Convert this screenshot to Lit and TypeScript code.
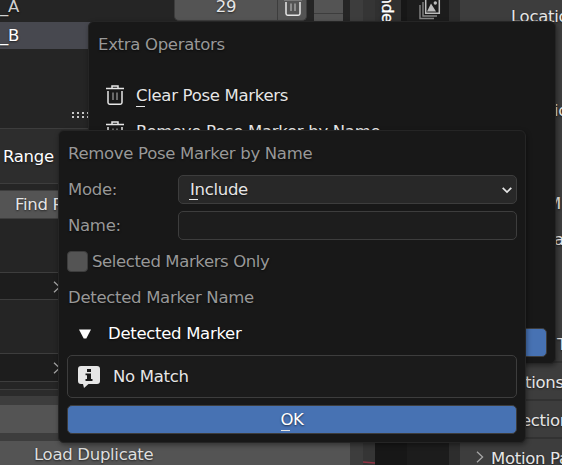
import { LitElement, html, css, svg } from "lit";
import { customElement } from "lit/decorators.js";

const trash = svg`<svg class="icon" width="18" height="20" viewBox="0 0 18 20">
  <path d="M0 3.5H18M6 3V1H12V3" fill="none" stroke="currentColor" stroke-width="1.5"/>
  <path d="M2 6V17.5Q2 19.2 3.7 19.2H14.3Q16 19.2 16 17.5V6" fill="none" stroke="currentColor" stroke-width="1.5"/>
  <path d="M7 7.5V15M11 7.5V15" stroke="currentColor" stroke-width="1.2" opacity=".65"/>
</svg>`;

const right = svg`<svg class="chev" width="8" height="12" viewBox="0 0 8 12">
  <path d="M1 .7L6.6 6L1 11.3" fill="none" stroke="#a6a6a6" stroke-width="1.3"/>
</svg>`;

@customElement("app-root")
export class AppRoot extends LitElement {
  static styles = css`
    * { box-sizing: border-box; }
    :host {
      display: block; position: relative; width: 562px; height: 465px; overflow: hidden;
      font: 16.5px/29px "DejaVu Sans", sans-serif; letter-spacing: -0.3px; color: #e6e6e6; background: #3d3d3d;
      white-space: nowrap; text-shadow: 0 1px 2px #0009;
    }
    svg { display: block; flex: none; }
    .page { display: flex; height: 465px; }
    .left { width: 350px; flex: none; display: flex; flex-direction: column; background: #252525; }
    .top { height: 22px; display: flex; flex: none; overflow: hidden; }
    .top .name { width: 174px; flex: none; line-height: 14px; color: #d0d0d0; }
    .count { width: 104px; height: 21px; flex: none; background: #545454; border: 1px solid #3d3d3d; border-top: 0; border-radius: 0 0 0 5px; text-align: center; line-height: 13px; }
    .bin { width: 29px; height: 21px; flex: none; background: #545454; border: 1px solid #3d3d3d; border-width: 0 1px 1px 0; border-radius: 0 0 5px 0; padding-left: 6px; }
    .bin svg { margin-top: -4px; }
    .arrows { width: 29px; margin-left: 7px; background: linear-gradient(#545454 13px, #3d3d3d 13px 14px, #545454 14px); }
    .rowb { height: 27px; width: 343px; background: #47484f; line-height: 27px; color: #fff; }
    .grip { height: 79px; padding: 63px 0 0 72px; }
    .dots { width: 18px; height: 7px; background: repeating-linear-gradient(90deg, #c8c8c8 0 2px, transparent 2px 5px); mask: linear-gradient(#000 2px, transparent 2px 4px, #000 4px 6px, transparent 6px); }
    .range { height: 56px; border: 1px solid #3d3d3d; border-width: 1px 0; background: #2d2d2d; line-height: 56px; padding-left: 3px; color: #fff; }
    .find { height: 29px; margin-top: 6px; border: 1px solid #3d3d3d; border-width: 1px 0; line-height: 27px; background: #545454; padding-left: 15px; }
    .list { height: 29px; border: 1px solid #3d3d3d; border-width: 1px 0; background: #1d1d1d; padding: 8px 0 0 53px; }
    .gap { height: 53px; }
    .strip { height: 8px; border-bottom: 1px solid #3d3d3d; }
    .strip.low { height: 7px; background: #2b2b2b; }
    .foot { height: 68px; background: #3d3d3d; padding-top: 8px; }
    .blank { height: 28px; background: #545454; }
    .load { height: 28px; margin-top: 8px; background: #545454; line-height: 27px; padding-left: 34px; color: #dedede; }
    .edge { width: 13px; background: #3d3d3d; flex: none; }
    .view { width: 12px; background: #353535; flex: none; display: flex; align-items: flex-end; }
    .tab { width: 26px; background: linear-gradient(#303030 50%, #171717 50%); flex: none; }
    .vert { writing-mode: vertical-rl; height: 22px; line-height: 24px; display: flex; justify-content: flex-end; color: #fff; width: 24px; overflow: hidden; font-size: 16px; letter-spacing: -.7px; -webkit-text-stroke: .3px #fff; }
    .div { width: 6px; background: #171717; flex: none; }
    .icons { width: 42px; background: #1c1c1c; flex: none; padding-left: 12px; }
    .div2 { width: 11px; background: #2d2d2d; flex: none; }
    .props { width: 102px; flex: none; background: #3d3d3d; overflow: hidden; display: flex; flex-direction: column; }
    .p { flex: none; overflow: hidden; line-height: 30px; display: flex; align-items: center; }
    .loc { height: 34px; padding-left: 51px; }
    .ion { height: 154px; padding-left: 94px; }
    .m { height: 32px; padding-left: 87px; }
    .al { height: 40px; padding-left: 94px; }
    .space { height: 64px; }
    .tr { height: 37px; padding: 4px 0 0 97px; }
    .head { height: 38px; border-top: 2px solid #323232; padding-top: 3px; }
    .tions { padding-left: 65px; }
    .ections { padding-left: 61px; }
    .motion { padding-left: 16px; gap: 7px; }
    .motion svg { margin-bottom: 3px; }

    .pop { position: absolute; background: #181818; border: 1px solid #252525; border-radius: 6px; padding: 8px; box-shadow: 1px 2px 5px #0006; }
    .menu { left: 88px; top: 21px; width: 468px; height: 343px; display: flex; flex-direction: column; }
    .dim { color: #989898; }
    .menu .dim { padding-left: 1px; }
    .item { display: flex; align-items: center; height: 29px; padding-left: 9px; gap: 12px; margin-bottom: 7px; }
    .item svg { margin-bottom: 2px; }
    .item.one { margin-top: 22px; }
    .btn { height: 29px; border-radius: 5px; border: 1px solid #3d3d3d; background: #4772b3; color: #fff; text-align: center; line-height: 27px; }
    .menu .btn { margin-top: auto; margin-bottom: -2px; }
    .k { position: relative; }
    .k::after { content: ""; position: absolute; left: 0; bottom: -2px; width: 9px; height: 1px; background: #e6e6e6; }
    .field .k::after { left: -1px; bottom: -1px; }
    .btn .k::after { left: 1px; }
    .dialog { left: 58px; top: 130px; width: 468px; height: 313px; display: flex; flex-direction: column; gap: 7px; }
    .r { height: 29px; flex: none; display: flex; align-items: center; padding-left: 1px; }
    .r .lab { width: 110px; flex: none; }
    .field { flex: 1; height: 29px; border: 1px solid #3d3d3d; border-radius: 5px; background: #1d1d1d; display: flex; align-items: center; justify-content: space-between; padding: 0 4px 0 11px; line-height: 27px; }
    .field.sel { background: #282828; color: #e6e6e6; }
    .box { width: 21px; height: 21px; border-radius: 4px; background: #545454; border: 1px solid #3d3d3d; margin: 0 4px 0 -1px; }
    .check { letter-spacing: -.38px; }
    .open { color: #fff; gap: 17px; padding-left: 12px; }
    .info { height: 43px; border: 1px solid #3d3d3d; border-radius: 5px; background: #1b1b1b; display: flex; align-items: center; padding-left: 10px; gap: 13px; flex: none; }
  `;

  render() {
    return html`
      <div class="page">
        <div class="left">
          <div class="top">
            <div class="name">_A</div>
            <div class="count">29</div>
            <div class="bin">${trash}</div>
            <div class="arrows"></div>
          </div>
          <div class="rowb">_B</div>
          <div class="grip"><div class="dots"></div></div>
          <div class="range">Range</div>
          <div class="find">Find R</div>
          <div class="gap"></div>
          <div class="list">${right}</div>
          <div class="gap"></div>
          <div class="list">${right}</div>
          <div class="strip"></div>
          <div class="strip low"></div>
          <div class="foot">
            <div class="blank"></div>
            <div class="load">Load Duplicate</div>
          </div>
        </div>
        <div class="edge"></div>
        <div class="view">
          <svg width="12" height="4" viewBox="0 0 12 4"><path d="M0 1L12 2" stroke="#8f3444" stroke-width="1.6" /></svg>
        </div>
        <div class="tab"><div class="vert">nde</div></div>
        <div class="div"></div>
        <div class="icons">
          <svg width="22" height="20" viewBox="0 0 22 20">
            <path d="M1 5V18.5H15M4 2V16H18" fill="none" stroke="#858585" stroke-width="1.4" />
            <path d="M6.7 -3V13.3H20.3V-3" fill="none" stroke="#bdbdbd" stroke-width="1.5" />
            <path d="M8 11.5L12 3.5L17 11.5Z" fill="#bdbdbd" /><circle cx="16.3" cy="3" r="1.7" fill="#bdbdbd" />
          </svg>
        </div>
        <div class="div2"></div>
        <div class="props">
          <div class="p loc">Location</div>
          <div class="p ion">ion</div>
          <div class="p m">M</div>
          <div class="p al">al</div>
          <div class="p space"></div>
          <div class="p tr">Tr</div>
          <div class="p head tions">tions</div>
          <div class="p head ections">ections</div>
          <div class="p head motion">${right}<span>Motion Paths</span></div>
        </div>
      </div>

      <div class="pop menu">
        <div class="dim">Extra Operators</div>
        <div class="item one">${trash}<span><span class="k">C</span>lear Pose Markers</span></div>
        <div class="item">${trash}<span>Remove Pose Marker by Name</span></div>
        <div class="btn"></div>
      </div>

      <div class="pop dialog">
        <div class="r dim">Remove Pose Marker by Name</div>
        <div class="r dim">
          <span class="lab">Mode:</span>
          <div class="field sel">
            <span><span class="k">I</span>nclude</span>
            <svg width="10" height="8" viewBox="0 0 10 8"><path d="M.7 1.8L5 6L9.3 1.8" fill="none" stroke="#e6e6e6" stroke-width="1.7" /></svg>
          </div>
        </div>
        <div class="r dim"><span class="lab">Name:</span><div class="field"></div></div>
        <div class="r dim check"><div class="box"></div>Selected Markers Only</div>
        <div class="r dim">Detected Marker Name</div>
        <div class="r open">
          <svg width="12" height="10" viewBox="0 0 12 10"><path d="M0 .5H12L7.3 9.5H4.7Z" fill="#fff" /></svg>
          <span>Detected Marker</span>
        </div>
        <div class="info">
          <svg width="22" height="22" viewBox="0 0 22 22">
            <path d="M3 0H19Q22 0 22 3V15Q22 18 19 18H10.5L6 22L5 18H3Q0 18 0 15V3Q0 0 3 0Z" fill="#e6e6e6" />
            <path d="M9 3H13V6H9ZM7.5 7.5H13V13H14.5V15H7.5V13H9V9.3H7.5Z" fill="#181818" />
          </svg>
          <span>No Match</span>
        </div>
        <div class="btn"><span class="k">O</span>K</div>
      </div>
    `;
  }
}
